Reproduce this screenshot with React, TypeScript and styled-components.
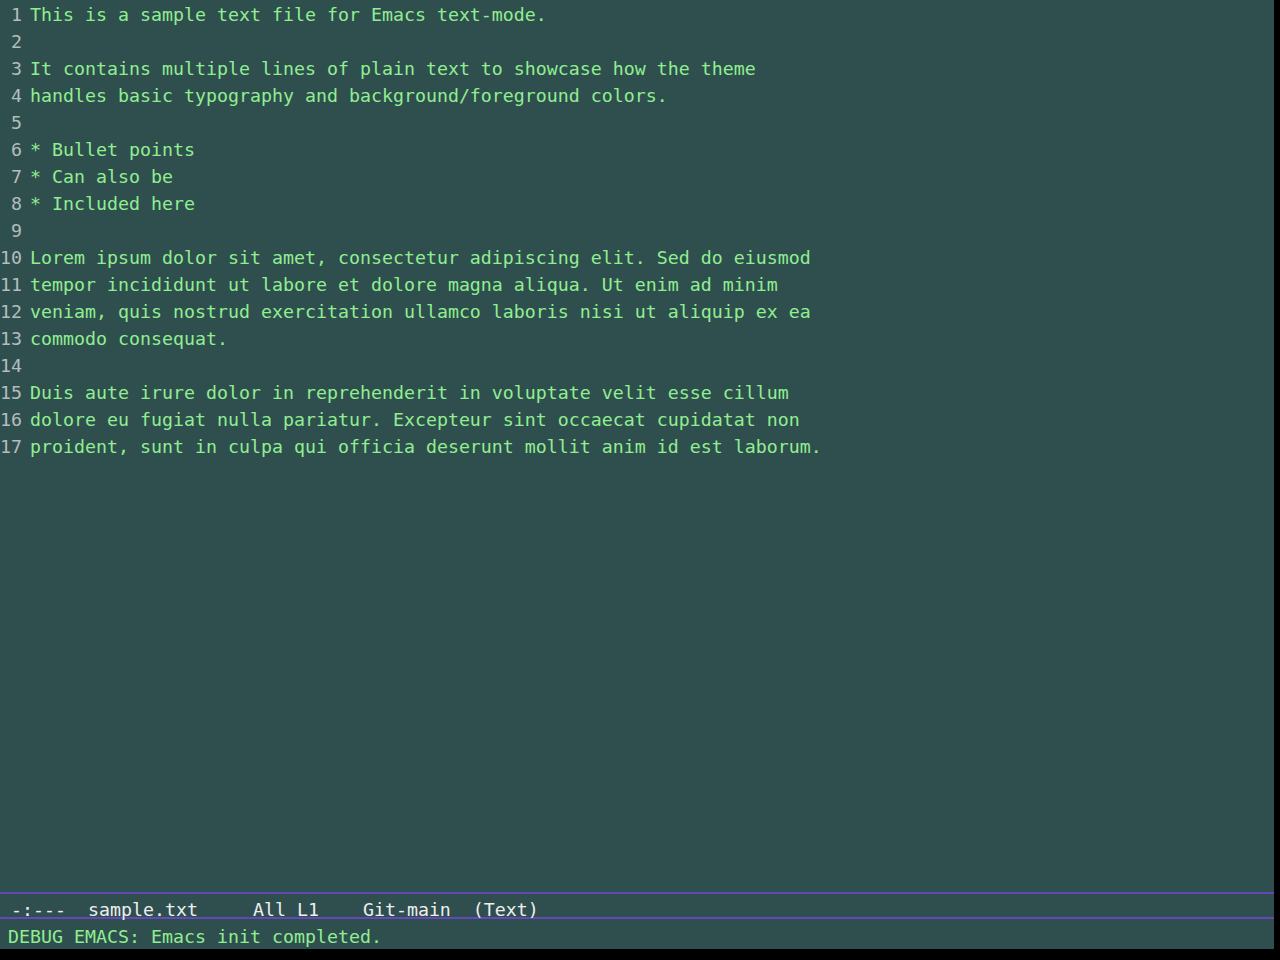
import React from "react";
import styled, { createGlobalStyle } from "styled-components";

const GlobalStyle = createGlobalStyle`
  html, body {
    margin: 0;
    padding: 0;
    background: #000000;
  }
  body {
    width: 1280px;
    height: 960px;
    overflow: hidden;
  }
`;

const Frame = styled.div`
  width: 1274px;
  height: 949px;
  background: #2f4f4f;
  display: flex;
  flex-direction: column;
  font-family: "DejaVu Sans Mono", "Liberation Mono", monospace;
  font-size: 18.27px;
  color: #90ee90;
`;

const Buffer = styled.div`
  flex: 1;
  display: flex;
  flex-direction: column;
  padding-top: 1px;
  overflow: hidden;
`;

const Line = styled.div`
  display: flex;
  height: 27px;
  line-height: 27px;
  white-space: pre;
`;

const LineNumber = styled.span`
  width: 22px;
  flex: none;
  text-align: right;
  color: #b3bdbd;
`;

const LineText = styled.span`
  margin-left: 8px;
  color: #90ee90;
`;

const ModeLine = styled.div`
  height: 23px;
  flex: none;
  border-top: 2px solid #6248b8;
  border-bottom: 2px solid #6248b8;
  line-height: 32px;
  white-space: pre;
  color: #eeeeee;
  overflow: visible;
  position: relative;
  z-index: 1;
`;

const EchoArea = styled.div`
  height: 26px;
  flex: none;
  padding: 4px 0 0 8px;
  line-height: 27px;
  white-space: pre;
  color: #90ee90;
`;

const lines = [
  "This is a sample text file for Emacs text-mode.",
  "",
  "It contains multiple lines of plain text to showcase how the theme",
  "handles basic typography and background/foreground colors.",
  "",
  "* Bullet points",
  "* Can also be",
  "* Included here",
  "",
  "Lorem ipsum dolor sit amet, consectetur adipiscing elit. Sed do eiusmod",
  "tempor incididunt ut labore et dolore magna aliqua. Ut enim ad minim",
  "veniam, quis nostrud exercitation ullamco laboris nisi ut aliquip ex ea",
  "commodo consequat.",
  "",
  "Duis aute irure dolor in reprehenderit in voluptate velit esse cillum",
  "dolore eu fugiat nulla pariatur. Excepteur sint occaecat cupidatat non",
  "proident, sunt in culpa qui officia deserunt mollit anim id est laborum.",
];

export default function App() {
  return (
    <>
      <GlobalStyle />
      <Frame>
        <Buffer>
          {lines.map((text, i) => (
            <Line key={i}>
              <LineNumber>{i + 1}</LineNumber>
              <LineText>{text}</LineText>
            </Line>
          ))}
        </Buffer>
        <ModeLine>{" -:---  sample.txt     All L1    Git-main  (Text)"}</ModeLine>
        <EchoArea>DEBUG EMACS: Emacs init completed.</EchoArea>
      </Frame>
    </>
  );
}
